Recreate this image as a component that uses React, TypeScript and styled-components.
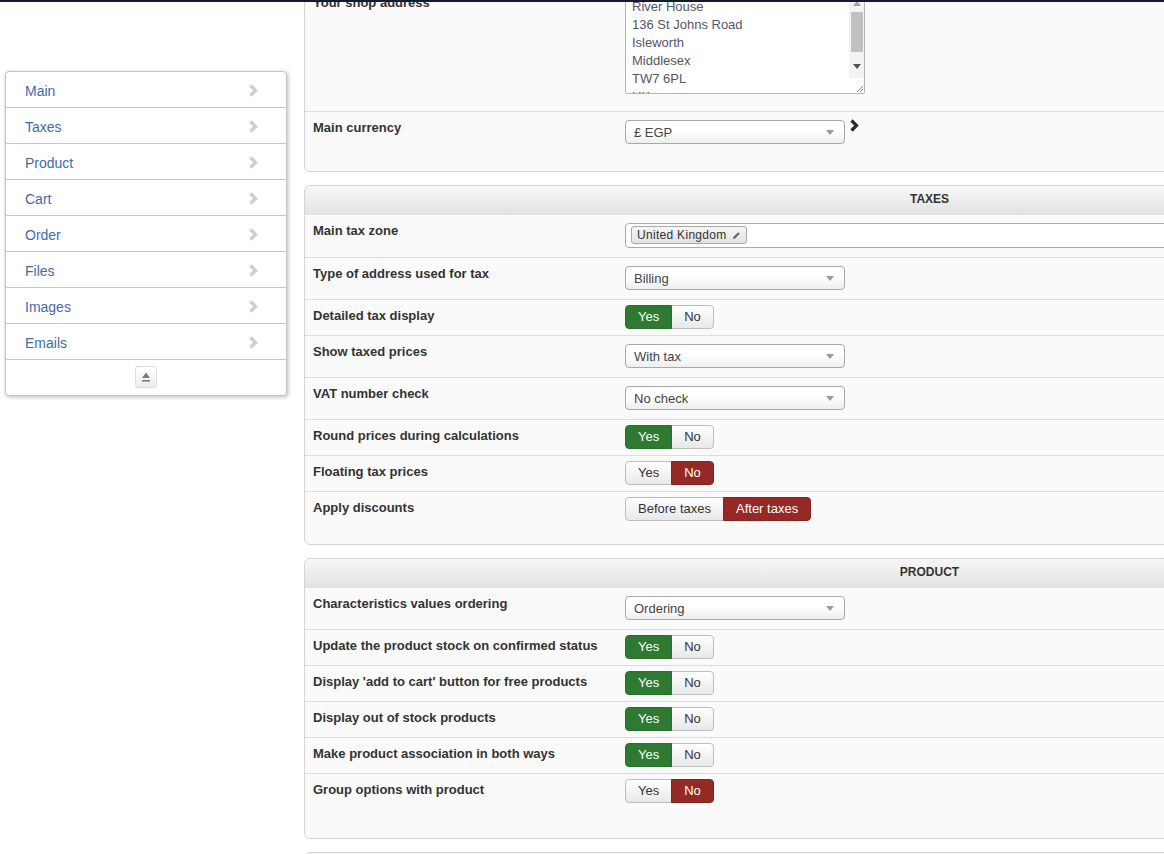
import React from "react";
import styled, { createGlobalStyle, css } from "styled-components";

const Global = createGlobalStyle`
  html, body { margin: 0; padding: 0; background: #fff; overflow: hidden; }
  body { font-family: "Liberation Sans", Arial, sans-serif; color: #333; }
  * { box-sizing: border-box; }
`;

const TopLine = styled.div`
  position: fixed;
  top: 0; left: 0; right: 0;
  height: 2px;
  background: #111c2f;
  z-index: 10;
`;

const Page = styled.div`
  display: flex;
  align-items: flex-start;
  width: 1555px;
`;

const SideCol = styled.div`
  width: 304px;
  flex: none;
  padding: 71px 0 0 5px;
`;

const Menu = styled.nav`
  width: 282px;
  border: 1px solid #c6c6c6;
  border-radius: 4px;
  background: #fff;
  box-shadow: 1px 1px 4px rgba(0, 0, 0, 0.28);
`;

const MenuItem = styled.a`
  display: flex;
  align-items: center;
  justify-content: space-between;
  height: 36px;
  padding: 2px 28px 0 19px;
  border-bottom: 1px solid #c8c8c8;
  font-size: 14px;
  color: #3e6ca9;
  text-decoration: none;
`;

const MenuFoot = styled.div`
  display: flex;
  justify-content: center;
  padding: 6px 0 7px;
`;

const IconButton = styled.button`
  width: 22px;
  height: 22px;
  padding: 0;
  border: 1px solid #dcdcdc;
  border-radius: 3px;
  background: linear-gradient(#ffffff, #ededed);
  display: flex;
  align-items: center;
  justify-content: center;
`;

const Main = styled.main`
  width: 1251px;
  flex: none;
  margin-top: -14px;
  display: flex;
  flex-direction: column;
  gap: 13px;
`;

const Panel = styled.section<{ $pb: number }>`
  background: #fafafa;
  border: 1px solid #d4d4d4;
  border-radius: 6px;
  padding-bottom: ${(p) => p.$pb}px;
`;

const PanelHead = styled.div`
  height: 29px;
  line-height: 27px;
  text-align: center;
  font-size: 12px;
  font-weight: bold;
  color: #333;
  border-radius: 6px 6px 0 0;
  border-bottom: 1px solid #e2e2e2;
  background: linear-gradient(#f7f7f7, #e3e3e3);
`;

const Row = styled.div`
  display: flex;
  align-items: flex-start;
  border-bottom: 1px solid #dcdcdc;
  &:last-child { border-bottom: none; }
`;

const Label = styled.div`
  width: 320px;
  flex: none;
  padding: 8px 8px 0;
  font-size: 13px;
  line-height: 16px;
  font-weight: bold;
  color: #333;
`;

const Control = styled.div`
  display: flex;
  align-items: flex-start;
  gap: 4px;
  padding: 5px 0 6px;
`;

const FakeTextarea = styled.div`
  width: 240px;
  height: 99px;
  margin: 3px 0 11px;
  border: 1px solid #b4b4b4;
  border-radius: 2px;
  background: #fff;
  display: flex;
  overflow: hidden;
`;

const TextLines = styled.div`
  flex: 1;
  padding: 2px 6px;
  font-size: 13px;
  line-height: 18px;
  color: #555566;
`;

const ScrollCol = styled.div`
  width: 15px;
  flex: none;
  display: flex;
  flex-direction: column;
`;

const ScrollTrack = styled.div`
  flex: 1;
  background: #f3f3f3;
  display: flex;
  flex-direction: column;
  align-items: center;
`;

const ScrollArrow = styled.div<{ $mt?: number }>`
  height: 14px;
  margin-top: ${(p) => p.$mt ?? 0}px;
  display: flex;
  align-items: center;
  justify-content: center;
`;

const ScrollThumb = styled.div`
  width: 12px;
  height: 40px;
  background: #c1c1c1;
  margin-top: 2px;
`;

const Grip = styled.div`
  height: 15px;
  background: #fff;
  display: flex;
  align-items: flex-end;
  justify-content: flex-end;
`;

const Select = styled.div`
  width: 220px;
  height: 24px;
  margin: 3px 0;
  padding: 0 8px;
  border: 1px solid #a9a9a9;
  border-radius: 4px;
  background: linear-gradient(#ffffff 0%, #ffffff 45%, #eeeeee 100%);
  display: flex;
  align-items: center;
  justify-content: space-between;
  font-size: 13px;
  color: #444;
`;

const Caret = styled.span`
  width: 0;
  height: 0;
  border-left: 4px solid transparent;
  border-right: 4px solid transparent;
  border-top: 5px solid #999;
  margin-right: 2px;
`;

const TagBox = styled.div`
  width: 700px;
  height: 25px;
  margin: 3px 0;
  padding: 2px 5px;
  border: 1px solid #aaa;
  border-radius: 4px;
  background: #fff;
  display: flex;
  align-items: flex-start;
`;

const Tag = styled.span`
  height: 18px;
  padding: 0 5px;
  border: 1px solid #a8a8a8;
  border-radius: 3px;
  background: linear-gradient(#f6f6f6, #e2e2e2);
  display: inline-flex;
  align-items: center;
  gap: 5px;
  font-size: 12px;
  letter-spacing: 0.3px;
  color: #333;
`;

const Toggle = styled.div`
  display: inline-flex;
`;

const ToggleBtn = styled.button<{ $tone?: "green" | "red" }>`
  height: 24px;
  padding: 0 12px;
  margin: 0;
  margin-left: -1px;
  font-family: "Liberation Sans", Arial, sans-serif;
  font-size: 13px;
  line-height: 22px;
  color: #333;
  border: 1px solid #bdbdbd;
  background: linear-gradient(#ffffff, #e8e8e8);
  &:first-child { margin-left: 0; border-radius: 4px 0 0 4px; }
  &:last-child { border-radius: 0 4px 4px 0; }
  ${(p) =>
    p.$tone === "green" &&
    css`
      background: #2f7a33;
      border-color: #2b6f2f;
      color: #fff;
      position: relative;
    `}
  ${(p) =>
    p.$tone === "red" &&
    css`
      background: #942925;
      border-color: #852420;
      color: #fff;
      position: relative;
    `}
`;

const ChevronWrap = styled.span`
  display: flex;
  margin-top: 2px;
`;

const Chevron = ({ color, w = 10, h = 13, sw = 3.4 }: { color: string; w?: number; h?: number; sw?: number }) => (
  <svg width={w} height={h} viewBox="0 0 10 13">
    <path d="M2.5 1.5 L7.5 6.5 L2.5 11.5" fill="none" stroke={color} strokeWidth={sw} strokeLinejoin="miter" />
  </svg>
);

const YesNo = ({ value }: { value: boolean }) => (
  <Toggle>
    <ToggleBtn $tone={value ? "green" : undefined}>Yes</ToggleBtn>
    <ToggleBtn $tone={!value ? "red" : undefined}>No</ToggleBtn>
  </Toggle>
);

const Sel = ({ v }: { v: string }) => (
  <Select>
    <span>{v}</span>
    <Caret />
  </Select>
);

const menu = ["Main", "Taxes", "Product", "Cart", "Order", "Files", "Images", "Emails"];

export default function App() {
  return (
    <>
      <Global />
      <TopLine />
      <Page>
        <SideCol>
          <Menu>
            {menu.map((m) => (
              <MenuItem key={m} href="#">
                {m}
                <Chevron color="#cfcfcf" />
              </MenuItem>
            ))}
            <MenuFoot>
              <IconButton>
                <svg width="10" height="10" viewBox="0 0 10 10">
                  <path d="M5 0.5 L9 6 L1 6 Z" fill="#7a7a7a" />
                  <rect x="1" y="8" width="8" height="1.6" fill="#7a7a7a" />
                </svg>
              </IconButton>
            </MenuFoot>
          </Menu>
        </SideCol>
        <Main>
          <Panel $pb={18}>
            <Row>
              <Label>Your shop address</Label>
              <Control>
                <FakeTextarea>
                  <TextLines>
                    <div>River House</div>
                    <div>136 St Johns Road</div>
                    <div>Isleworth</div>
                    <div>Middlesex</div>
                    <div>TW7 6PL</div>
                    <div>UK</div>
                  </TextLines>
                  <ScrollCol>
                    <ScrollTrack>
                      <ScrollArrow>
                        <svg width="8" height="5" viewBox="0 0 8 5"><path d="M4 0 L8 5 L0 5 Z" fill="#a3a3a3" /></svg>
                      </ScrollArrow>
                      <ScrollThumb />
                      <ScrollArrow $mt={7}>
                        <svg width="8" height="5" viewBox="0 0 8 5"><path d="M0 0 L8 0 L4 5 Z" fill="#505050" /></svg>
                      </ScrollArrow>
                    </ScrollTrack>
                    <Grip>
                      <svg width="9" height="9" viewBox="0 0 9 9">
                        <path d="M8 2 L2 8 M8 5 L5 8" stroke="#888" strokeWidth="1" />
                      </svg>
                    </Grip>
                  </ScrollCol>
                </FakeTextarea>
              </Control>
            </Row>
            <Row>
              <Label>Main currency</Label>
              <Control>
                <Sel v="£ EGP" />
                <ChevronWrap>
                  <Chevron color="#2b2b2b" w={10} h={13} sw={3.2} />
                </ChevronWrap>
              </Control>
            </Row>
          </Panel>

          <Panel $pb={17}>
            <PanelHead>TAXES</PanelHead>
            <Row>
              <Label>Main tax zone</Label>
              <Control>
                <TagBox>
                  <Tag>
                    United Kingdom
                    <svg width="9" height="9" viewBox="0 0 9 9">
                      <path d="M1 8 L1.6 5.8 L6.2 1.2 L7.8 2.8 L3.2 7.4 Z" fill="#666" />
                    </svg>
                  </Tag>
                </TagBox>
              </Control>
            </Row>
            <Row>
              <Label>Type of address used for tax</Label>
              <Control><Sel v="Billing" /></Control>
            </Row>
            <Row>
              <Label>Detailed tax display</Label>
              <Control><YesNo value={true} /></Control>
            </Row>
            <Row>
              <Label>Show taxed prices</Label>
              <Control><Sel v="With tax" /></Control>
            </Row>
            <Row>
              <Label>VAT number check</Label>
              <Control><Sel v="No check" /></Control>
            </Row>
            <Row>
              <Label>Round prices during calculations</Label>
              <Control><YesNo value={true} /></Control>
            </Row>
            <Row>
              <Label>Floating tax prices</Label>
              <Control><YesNo value={false} /></Control>
            </Row>
            <Row>
              <Label>Apply discounts</Label>
              <Control>
                <Toggle>
                  <ToggleBtn>Before taxes</ToggleBtn>
                  <ToggleBtn $tone="red">After taxes</ToggleBtn>
                </Toggle>
              </Control>
            </Row>
          </Panel>

          <Panel $pb={29}>
            <PanelHead>PRODUCT</PanelHead>
            <Row>
              <Label>Characteristics values ordering</Label>
              <Control><Sel v="Ordering" /></Control>
            </Row>
            <Row>
              <Label>Update the product stock on confirmed status</Label>
              <Control><YesNo value={true} /></Control>
            </Row>
            <Row>
              <Label>Display 'add to cart' button for free products</Label>
              <Control><YesNo value={true} /></Control>
            </Row>
            <Row>
              <Label>Display out of stock products</Label>
              <Control><YesNo value={true} /></Control>
            </Row>
            <Row>
              <Label>Make product association in both ways</Label>
              <Control><YesNo value={true} /></Control>
            </Row>
            <Row>
              <Label>Group options with product</Label>
              <Control><YesNo value={false} /></Control>
            </Row>
          </Panel>

          <Panel $pb={0}>
            <PanelHead>CART</PanelHead>
          </Panel>
        </Main>
      </Page>
    </>
  );
}
